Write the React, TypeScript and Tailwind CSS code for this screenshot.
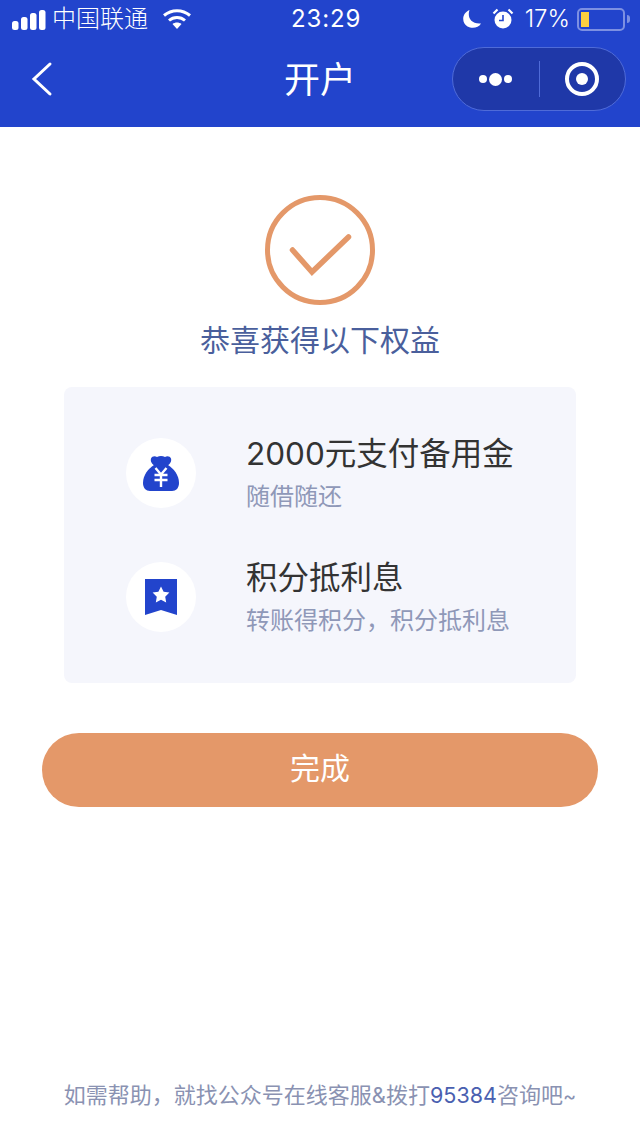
const FONT = "font-['Inter','Noto_Sans_CJK_SC',sans-serif]"

function StatusBar() {
  return (
    <div className="flex h-[38px] items-center pl-[12px] pr-[10px] text-white">
      <div className="flex w-[279px] items-center">
        <svg width="34" height="22" viewBox="0 0 34 22" fill="white">
          <rect x="0" y="13" width="6.500" height="9" rx="2.500" />
          <rect x="9" y="9" width="6.500" height="13" rx="2.500" />
          <rect x="18" y="5" width="6.500" height="17" rx="2.500" />
          <rect x="27" y="2" width="6.500" height="20" rx="2.500" />
        </svg>
        <span className="ml-[6px] text-[24px] leading-[30px] font-light">中国联通</span>
        <svg className="ml-[14px]" width="30" height="22" viewBox="0 0 30 22" fill="none" stroke="white" strokeWidth="3">
          <path d="M2 7.500C9.500 1 20.500 1 28 7.500" />
          <path d="M7 12.500C11.500 8.500 18.500 8.500 23 12.500" />
          <path d="M15 21l-4.500-5c2.600-2 6.400-2 9 0z" fill="white" stroke="none" />
        </svg>
      </div>
      <span className="text-[24px] leading-[30px] tracking-[0.9px]">23:29</span>
      <div className="ml-auto flex items-center">
        <svg width="20" height="20" viewBox="0 0 20 20" fill="white">
          <path d="M7.500 1C5 8 9 15.500 19 14.500 16.500 19 10 20 5.500 17.500 -0.500 14 -0.500 4.500 7.500 1z" />
        </svg>
        <svg className="ml-[10px]" width="22" height="22" viewBox="0 0 22 22">
          <circle cx="11" cy="12" r="8.500" fill="white" />
          <path d="M11 7v5.500H7" fill="none" stroke="#2244cc" strokeWidth="1.600" />
          <path d="M1.500 5.500L5.500 1.500M20.500 5.500L16.500 1.500" stroke="white" strokeWidth="2.200" />
        </svg>
        <span className="ml-[11px] text-[24px] leading-[30px] font-light">17%</span>
        <div className="ml-[7px] flex h-[23px] w-[48px] items-center rounded-[5px] border-2 border-[#7d90e2] px-[2px]">
          <div className="h-[15px] w-[8px] bg-[#fdcf3f]" />
        </div>
        <div className="ml-[2px] h-[8px] w-[3px] rounded-r-full bg-[#7d90e2]" />
      </div>
    </div>
  )
}

function NavBar() {
  return (
    <div className="grid h-[89px] grid-cols-[1fr_auto_1fr] items-start px-[14px]">
      <svg className="ml-[17px] mt-[23px]" width="22" height="36" viewBox="0 0 22 36" fill="none" stroke="white" strokeWidth="3" strokeLinecap="round">
        <path d="M19 3L3 18l16 15" />
      </svg>
      <h1 className="mt-[21px] text-[36px] leading-[42px] text-white">开户</h1>
      <div className="mt-[9px] flex h-[64px] w-[174px] items-center justify-self-end rounded-full border border-[#4f6bd8] bg-[#1f38a8]">
        <div className="flex flex-1 items-center justify-center gap-[2px]">
          <div className="h-[8px] w-[8px] rounded-full bg-white" />
          <div className="h-[13px] w-[13px] rounded-full bg-white" />
          <div className="h-[8px] w-[8px] rounded-full bg-white" />
        </div>
        <div className="h-[36px] w-px bg-[#4f6bd8]" />
        <div className="flex flex-1 items-center justify-center">
          <div className="flex h-[34px] w-[34px] items-center justify-center rounded-full border-[4px] border-white">
            <div className="h-[12px] w-[12px] rounded-full bg-white" />
          </div>
        </div>
      </div>
    </div>
  )
}

function BenefitRow({ icon, title, desc }: { icon: React.ReactNode; title: string; desc: string }) {
  return (
    <div className="flex items-center">
      <div className="flex h-[70px] w-[70px] items-center justify-center rounded-full bg-white">{icon}</div>
      <div className="ml-[50px]">
        <p className="text-[31.5px] leading-[40px] text-[#333333]">{title}</p>
        <p className="mt-[8px] text-[24px] leading-[30px] text-[#8f98b8]">{desc}</p>
      </div>
    </div>
  )
}

export default function App() {
  return (
    <div className={`flex h-[1135px] w-[640px] flex-col bg-white ${FONT}`}>
      <header className="bg-[#2244cc]">
        <StatusBar />
        <NavBar />
      </header>

      <div className="flex flex-col items-center pt-[68px]">
        <svg width="110" height="110" viewBox="0 0 110 110" fill="none" stroke="#e49869">
          <circle cx="55" cy="55" r="52.500" strokeWidth="5" />
          <path d="M27.500 55L47 77 83.500 42" strokeWidth="5.500" strokeLinecap="round" strokeLinejoin="miter" />
        </svg>
        <p className="mt-[15px] text-[30px] leading-[40px] text-[#4a5f9c]">恭喜获得以下权益</p>
      </div>

      <div className="mx-[64px] mt-[27px] flex h-[296px] flex-col justify-center gap-[46px] rounded-[8px] bg-[#f5f6fc] pl-[62px]">
        <BenefitRow
          title="2000元支付备用金"
          desc="随借随还"
          icon={
            <svg width="36" height="36" viewBox="0 0 36 36" fill="#2244cc">
              <path d="M8 3.500c1-2.500 4-3 6-1.500 2.500-1.500 5.500-1.500 8 0 2-1.500 5-1 6 1.500 .800 3-1 5.500-3.500 7H11.500C9 9 7.200 6.500 8 3.500z" />
              <path d="M11 10h14c5.500 3.500 11 10 11 18 0 5-3 8-7 8H7c-4 0-7-3-7-8 0-8 5.500-14.500 11-18z" />
              <path d="M12.500 13l5.500 6.500 5.500-6.500M11.500 20h13M11.500 25h13M18 19.500V32" fill="none" stroke="white" strokeWidth="2.400" />
            </svg>
          }
        />
        <BenefitRow
          title="积分抵利息"
          desc="转账得积分，积分抵利息"
          icon={
            <svg width="32" height="36" viewBox="0 0 32 36" fill="#2244cc">
              <path d="M0 0h32v36L16 31 0 36z" />
              <path d="M16 7.500l2.600 5.300 5.800.8-4.200 4.100 1 5.800-5.200-2.700-5.200 2.700 1-5.800-4.200-4.100 5.800-.8z" fill="white" />
            </svg>
          }
        />
      </div>

      <button className="mx-[42px] mt-[50px] flex h-[74px] items-center justify-center rounded-full bg-[#e49869] pb-[3px] text-[30px] text-white">
        完成
      </button>

      <p className="mt-auto pb-[24px] text-center text-[22px] leading-[30px] text-[#8a92b2]">
        如需帮助，就找公众号在线客服&拨打<span className="text-[21.5px] text-[#4a5fb0]">95384</span>咨询吧<span className="text-[20px]">~</span>
      </p>
    </div>
  )
}
